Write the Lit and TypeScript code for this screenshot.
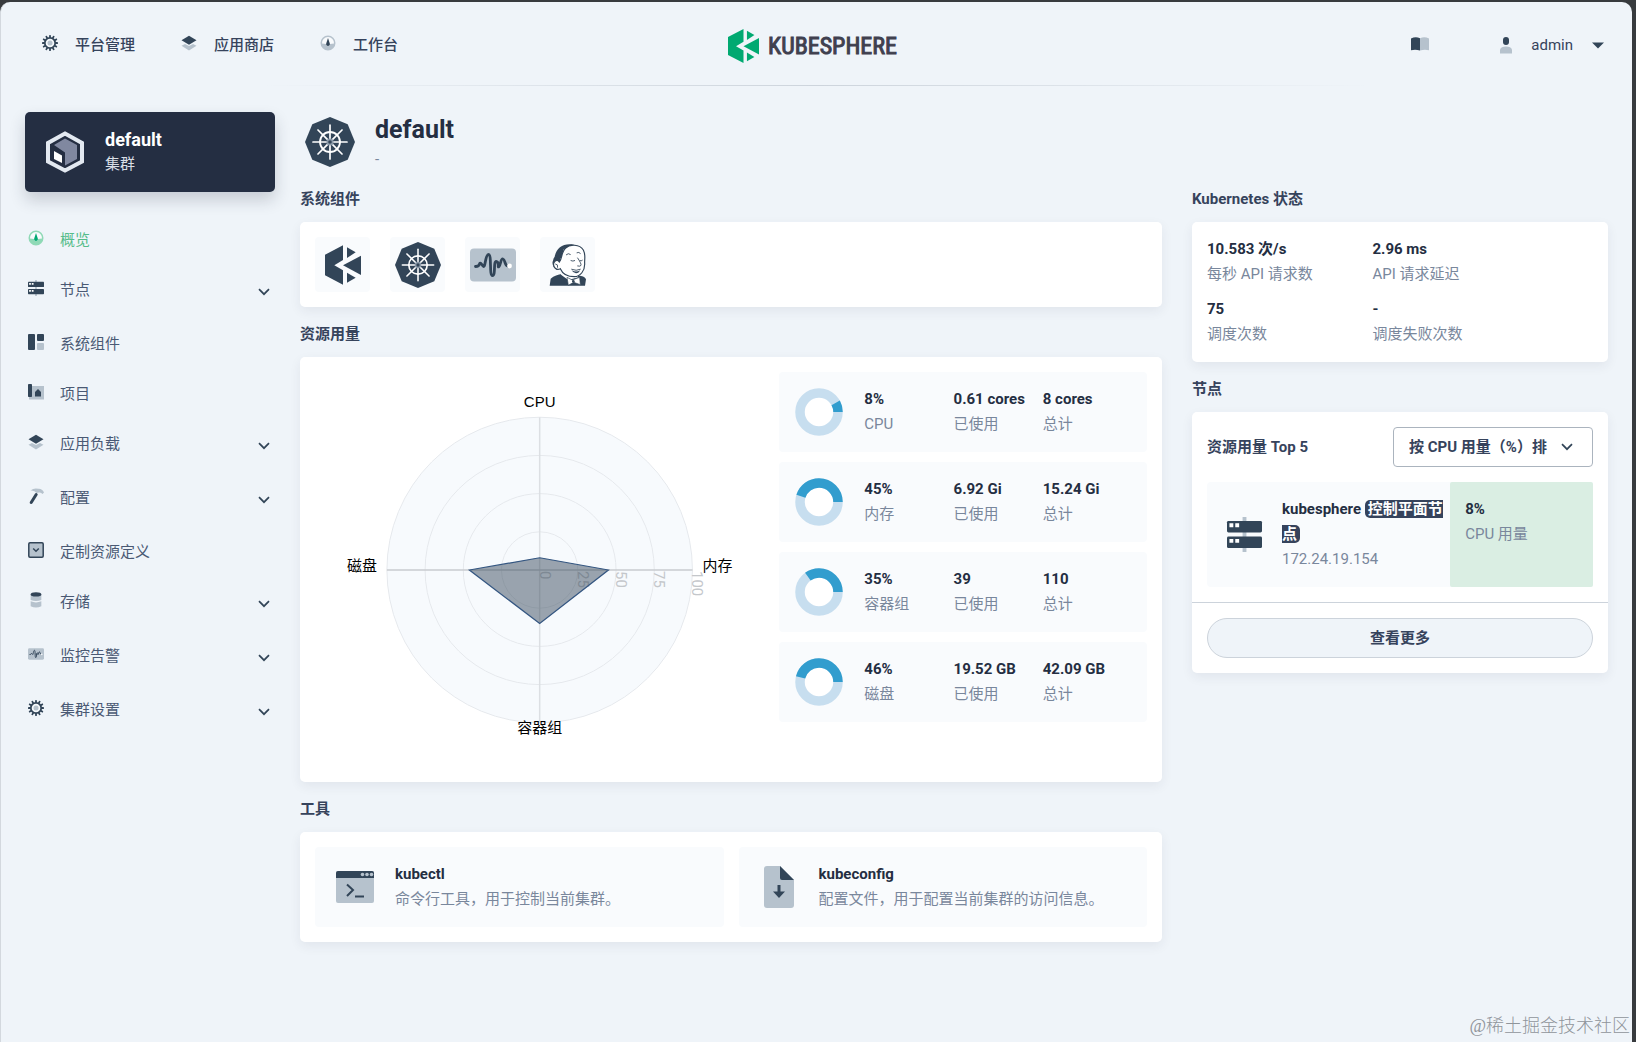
import { LitElement, html, svg, css } from "lit";
import { customElement, property } from "lit/decorators.js";

const D = "#324558";
const L = "#b6c2cd";

const teeth = Array.from({ length: 12 }, (_, i) => i * 30);
const spokes = Array.from({ length: 8 }, (_, i) => i * 45);

const wheel = svg`
  <path fill=${D} d="M25 0 42.7 7.3 50 25 42.7 42.7 25 50 7.3 42.7 0 25 7.3 7.3z"/>
  <circle cx="25" cy="25" r="10" fill="none" stroke="#fff" stroke-width="1.8"/>
  ${spokes.map(
    (a) => svg`<g transform="rotate(${a} 25 25)">
      <path d="M25 22V8" stroke="#fff" stroke-width="1.7" stroke-linecap="round"/>
    </g>`
  )}
  <circle cx="25" cy="25" r="3.6" fill="#8a99a8"/>
  <circle cx="25" cy="25" r="1.8" fill=${D}/>`;

const sphere = (fill: string) => svg`
  <g fill=${fill}>
    <path d="M0 28 54 0V44L28 60 54 75V118L0 90z"/>
    <path d="M66 6 92 21 66 38z"/>
    <path d="M54 60 108 31V89z"/>
    <path d="M66 82 92 97 66 112z"/>
  </g>`;

const gauge = (dark: string, light: string) => svg`
  <circle cx="8" cy="8" r="7" fill="#fff" fill-opacity=".6"/>
  <path fill=${light} d="M8 .5a7.500 7.500 0 1 0 0 15 7.500 7.500 0 0 0 0-15zm0 1.500a6 6 0 0 1 6 6.500l-4 .5a2 2 0 0 1-4 0l-4-.5A6 6 0 0 1 8 2z"/>
  <path fill=${dark} d="M8 3 9.800 8.600a1.900 1.900 0 1 1-3.600 0z"/>`;

const icons: Record<string, { box: string; art: unknown }> = {
  gear: {
    box: "0 0 16 16",
    art: svg`
      ${teeth.map(
        (a) => svg`<rect x="7.100" y="0" width="1.800" height="3.400" rx=".4" fill=${D} transform="rotate(${a} 8 8)"/>`
      )}
      <circle cx="8" cy="8" r="5.200" fill="#f4f8fb" stroke=${D} stroke-width="1.800"/>
      <circle cx="8" cy="8" r="2.500" fill=${L}/>`,
  },
  layers: {
    box: "0 0 16 16",
    art: svg`
      <path fill=${L} d="M.5 10.800 4 9l4 2 4-2 3.500 1.800L8 15.500z"/>
      <path fill=${D} d="M8 .8 15.500 5.300 8 9.800.5 5.300z"/>`,
  },
  gauge: { box: "0 0 16 16", art: gauge(D, L) },
  gaugeOn: { box: "0 0 16 16", art: gauge("#00a971", "#8fd9b6") },
  book: {
    box: "0 0 18 14",
    art: svg`
      <path fill=${D} d="M0 1.500Q4.500-.6 9 1.200V13.500Q4.500 12 0 13.200z"/>
      <path fill=${L} d="M18 1.500Q13.500-.6 9 1.200V13.500Q13.500 12 18 13.200z"/>`,
  },
  user: {
    box: "0 0 12 17",
    art: svg`
      <rect x="3" y="0" width="6" height="8" rx="3" fill=${D}/>
      <path fill=${L} d="M0 16.500V12.500Q1 9.500 6 9.500T12 12.500V16.500z"/>`,
  },
  caret: { box: "0 0 12 7", art: svg`<path fill=${D} d="M0 .5H12L6 6.500z"/>` },
  chevron: {
    box: "0 0 12 8",
    art: svg`<path fill="none" stroke=${D} stroke-width="1.700" d="M1 1.200 6 6.200 11 1.200"/>`,
  },
  nodes: {
    box: "0 0 36 36",
    art: svg`
      <path fill=${L} d="M16 0h4v36h-4z"/>
      <rect y="4" width="36" height="12" rx="1.500" fill=${D}/>
      <rect y="20" width="36" height="12" rx="1.500" fill=${D}/>
      <path fill="#fff" d="M2.500 6.500h4v4h-4zM8.500 6.500h4v4h-4zM2.500 22.500h4v4h-4zM8.500 22.500h4v4h-4z"/>`,
  },
  components: {
    box: "0 0 16 16",
    art: svg`
      <rect width="7" height="16" rx="1" fill=${D}/>
      <rect x="9" width="7" height="7" rx="1" fill=${D}/>
      <rect x="9" y="9" width="7" height="7" rx="1" fill=${L}/>`,
  },
  project: {
    box: "0 0 16 16",
    art: svg`
      <path fill=${L} d="M1 2h15v13.500H1z"/>
      <rect x="0" y="0" width="4" height="13" rx=".8" fill=${D}/>
      <path fill=${D} d="M10 5 13 8V12.500H7V8z"/>`,
  },
  hammer: {
    box: "0 0 16 16",
    art: svg`
      <path fill=${L} d="M2.500 2.500Q6-.5 10.500.8 14 .5 16 4.500L14.500 6Q13 4 11 4.500L8.500 5Q6.500 2 2.500 2.500z"/>
      <path stroke=${D} stroke-width="3" stroke-linecap="round" d="M8.200 6.500 3.200 14.500"/>`,
  },
  crd: {
    box: "0 0 16 16",
    art: svg`
      <rect x=".8" y=".8" width="14.400" height="14.400" rx="1.200" fill=${L} stroke=${D} stroke-width="1.500"/>
      <path fill="none" stroke=${D} stroke-width="1.500" d="M5.200 6.500 8 9.300 10.800 6.500"/>`,
  },
  storage: {
    box: "0 0 16 18",
    art: svg`
      <path fill=${L} d="M2 3V9Q8 11.500 14 9V3zM2 10.500V16Q8 18.800 14 16V10.500Q8 13 2 10.500z"/>
      <ellipse cx="8" cy="2.800" rx="6" ry="2.400" fill=${D}/>`,
  },
  monitor: {
    box: "0 0 46 33",
    art: svg`
      <rect width="46" height="33" rx="4" fill=${L}/>
      <path fill="none" stroke=${D} stroke-width="2.800" stroke-linecap="round" stroke-linejoin="round"
        d="M5.500 18Q9 18 9.500 15.500T13 17.500C15.500 21 15 6 18.500 6S19 27 22.500 27 23 12 26.500 13 27 20 29 18 30.500 10 33 10.500 34 17 38 17.500"/>
      <circle cx="39.500" cy="17.500" r="2.400" fill="#fff"/>`,
  },
  cluster: {
    box: "0 0 38 42",
    art: svg`
      <path fill="none" stroke="#e3e9f1" stroke-width="4" d="M19 2.500 36 12V30.500L19 39.500 2 30.500V12z"/>
      <path fill="#8088a0" d="M19 7.500 31 14V28L19 34.500V21.500L8 14z"/>
      <path fill="#fff" d="M8 20 16 24.500V32L8 28z"/>`,
  },
  wheel: { box: "0 0 50 50", art: wheel },
  sphere: { box: "0 0 108 118", art: sphere(D) },
  logo: { box: "0 0 108 118", art: sphere("#00a971") },
  jenkins: {
    box: "0 0 114 126",
    art: svg`
      <path fill=${D} d="M2 125 5 104Q20 92 40 90L82 94Q108 96 111 106L108 125z"/>
      <path fill="#fff" d="M38 78 36 92 58 108 88 100 82 88z"/>
      <path fill=${D} d="M68 1C42-2 22 12 17 38Q13 42 12 50 8 58 14 68L24 78 40 60 34 44Q44 34 42 18 56 6 82 5z"/>
      <path fill="#fff" stroke=${D} stroke-width="3.500" d="M50 12C62 0 92 0 103 18 111 34 106 44 107 58 108 80 94 98 76 98 56 98 40 88 34 74 22 80 12 70 14 58 18 46 28 48 31 54 40 46 36 24 50 12z"/>
      <path fill="none" stroke=${D} stroke-width="2.600" stroke-linecap="round" d="M52 32Q58 26 64 31M84 26Q90 23 94 28M66 50Q72 53 77 50M93 50Q97 52 100 49M86 42Q98 60 96 64T86 66M68 76Q82 82 94 76M20 60Q28 60 26 70"/>
      <path fill=${D} d="M68 79Q82 86 93 79 90 88 81 88 72 87 68 79z"/>
      <path fill="#fff" stroke=${D} stroke-width="2" d="M54 100 70 108 92 100 94 122 74 115 58 124z"/>
      <circle cx="73" cy="112" r="4" fill=${D}/>`,
  },
  terminal: {
    box: "0 0 38 32",
    art: svg`
      <rect width="38" height="32" rx="2" fill=${L}/>
      <path fill=${D} d="M2 0H36a2 2 0 0 1 2 2V7H0V2A2 2 0 0 1 2 0z"/>
      <g fill=${L}><circle cx="26.500" cy="3.500" r="1.800"/><circle cx="31" cy="3.500" r="1.800"/><circle cx="35.500" cy="3.500" r="1.800"/></g>
      <path fill="none" stroke=${D} stroke-width="2" d="M11 13.500 17 19 11 25M19 25.500H28"/>`,
  },
  file: {
    box: "0 0 30 42",
    art: svg`
      <path fill=${L} d="M3 0H16L30 14V39a3 3 0 0 1-3 3H3a3 3 0 0 1-3-3V3A3 3 0 0 1 3 0z"/>
      <path fill=${D} d="M16 0 30 14H18a2 2 0 0 1-2-2z"/>
      <path fill=${D} d="M13.500 19h3v6.500H21L15 32 9 25.500h4.500z"/>`,
  },
};

const icon = (name: string, cls: string) =>
  html`<svg class="icon ${cls}" viewBox=${icons[name].box} aria-hidden="true">${icons[name].art}</svg>`;

const menu = [
  { icon: "gaugeOn", label: "概览", on: true },
  { icon: "nodes", label: "节点", more: true },
  { icon: "components", label: "系统组件" },
  { icon: "project", label: "项目" },
  { icon: "layers", label: "应用负载", more: true },
  { icon: "hammer", label: "配置", more: true },
  { icon: "crd", label: "定制资源定义" },
  { icon: "storage", label: "存储", more: true },
  { icon: "monitor", label: "监控告警", more: true },
  { icon: "gear", label: "集群设置", more: true },
];

const usage = [
  { name: "CPU", pct: 8, used: "0.61 cores", total: "8 cores" },
  { name: "内存", pct: 45, used: "6.92 Gi", total: "15.24 Gi" },
  { name: "容器组", pct: 35, used: "39", total: "110" },
  { name: "磁盘", pct: 46, used: "19.52 GB", total: "42.09 GB" },
];

const status = [
  { value: "10.583 次/s", label: "每秒 API 请求数" },
  { value: "2.96 ms", label: "API 请求延迟" },
  { value: "75", label: "调度次数" },
  { value: "-", label: "调度失败次数" },
];

const shared = css`
  * {
    box-sizing: border-box;
  }
  .icon {
    display: block;
    flex: none;
    overflow: visible;
  }
  .value {
    font-weight: 700;
    color: #242e42;
  }
  .label {
    color: #79879c;
  }
`;

@customElement("usage-radar")
class UsageRadar extends LitElement {
  @property({ attribute: false }) rows = usage;

  static styles = css`
    :host {
      display: block;
    }
    .chart {
      display: block;
      width: 100%;
      height: 395px;
    }
    .axis-name {
      font: 15px "Liberation Sans", "Noto Sans CJK SC", sans-serif;
      fill: #000;
    }
    .tick {
      font: 15px Roboto, sans-serif;
      fill: #c4c7cb;
    }
  `;

  render() {
    const cx = 225;
    const cy = 198;
    const r = 153;
    const [cpu, mem, pod, disk] = this.rows.map((u) => (u.pct * r) / 100);
    const area = `${cx},${cy - cpu} ${cx + mem},${cy} ${cx},${cy + pod} ${cx - disk},${cy}`;
    return html`<svg class="chart" viewBox="0 0 450 395" role="img" aria-label="资源用量">
      <circle cx=${cx} cy=${cy} r=${r} fill="#f7fafd" />
      ${[0.25, 0.5, 0.75, 1].map(
        (k) => svg`<circle cx=${cx} cy=${cy} r=${k * r} fill="none" stroke="#e6e9ed"/>`
      )}
      <path d="M${cx} ${cy - r}V${cy + r}" stroke="#dcdfe3" stroke-width="1.5" />
      <path d="M${cx - r} ${cy}H${cx + r}" stroke="#c9cbcf" stroke-width="1.5" />
      ${[0, 25, 50, 75, 100].map(
        (t) => svg`<text class="tick" transform="translate(${cx + (t * r) / 100} ${cy + 1}) rotate(90)">${t}</text>`
      )}
      <polygon points=${area} fill="#324558" fill-opacity=".48" stroke="#345681" stroke-width="1.2" />
      <g class="axis-name">
        <text x=${cx} y="35" text-anchor="middle">CPU</text>
        <text x="388" y="199">内存</text>
        <text x=${cx} y="361" text-anchor="middle">容器组</text>
        <text x="62" y="199" text-anchor="end">磁盘</text>
      </g>
    </svg>`;
  }
}

@customElement("usage-row")
class UsageRow extends LitElement {
  @property({ attribute: false }) row = usage[0];

  static styles = [
    shared,
    css`
      :host {
        display: block;
      }
      .row {
        display: flex;
        align-items: center;
        gap: 20px;
        padding: 15px;
        background: #f9fbfd;
        border-radius: 4px;
        line-height: 25px;
      }
      .donut {
        flex: none;
        width: 50px;
        height: 50px;
      }
      .cells {
        flex: 1;
        display: grid;
        grid-template-columns: repeat(3, minmax(0, 1fr));
        white-space: nowrap;
      }
    `,
  ];

  render() {
    const u = this.row;
    return html`<div class="row">
      <svg class="donut" viewBox="0 0 50 50" aria-hidden="true">
        <circle cx="25" cy="25" r="19" fill="#fff" stroke="#c7deef" stroke-width="9.5" />
        <circle
          cx="25" cy="25" r="19" fill="none" stroke="#329dce" stroke-width="9.5"
          pathLength="100" stroke-dasharray="${u.pct} 100" transform="matrix(1 0 0 -1 0 50)"
        />
      </svg>
      <div class="cells">
        <div><div class="value">${u.pct}%</div><div class="label">${u.name}</div></div>
        <div><div class="value">${u.used}</div><div class="label">已使用</div></div>
        <div><div class="value">${u.total}</div><div class="label">总计</div></div>
      </div>
    </div>`;
  }
}

@customElement("app-root")
class AppRoot extends LitElement {
  static styles = [
    shared,
    css`
      :host {
        display: block;
        background: #383b3e;
        font: 15px/25px Roboto, "Noto Sans CJK SC", sans-serif;
        color: #36435c;
      }
      a {
        color: inherit;
        text-decoration: none;
      }
      h1, h2, h3, p, ul {
        margin: 0;
        padding: 0;
        font-size: inherit;
      }
      button, select {
        font: inherit;
        color: inherit;
        cursor: pointer;
      }
      .shell {
        padding: 2px 4px 0 0;
      }
      .page {
        position: relative;
        min-height: calc(100vh - 2px);
        background: #eff4f9;
        border-left: 1px solid #d3d8de;
        border-radius: 10px 10px 0 0;
      }
      .top {
        display: grid;
        grid-template-columns: 1fr auto 1fr;
        align-items: center;
        height: 83px;
        padding: 4px 28px 0 20px;
      }
      .rule {
        height: 1px;
        background: linear-gradient(90deg, transparent 16%, #cdd4dc 50%, transparent 84%);
      }
      .links {
        display: flex;
        gap: 46px;
        padding-left: 21px;
        font-weight: 500;
      }
      .link {
        display: flex;
        gap: 17px;
      }
      .link .icon {
        margin-top: 2px;
      }
      .brand {
        display: flex;
        align-items: center;
        gap: 9px;
      }
      .brand-name {
        font: 24px/34px "Liberation Sans Narrow", "Roboto Condensed", Roboto, sans-serif;
        color: #40404f;
        -webkit-text-stroke: 1px #40404f;
      }
      .account {
        display: flex;
        justify-content: flex-end;
        align-items: center;
        gap: 71px;
      }
      .plain {
        display: flex;
        align-items: center;
        gap: 19px;
        padding: 0;
        border: 0;
        background: none;
      }
      .s16 { width: 16px; height: 16px; }
      .s-book { width: 18px; height: 14px; margin-bottom: 4px; }
      .s-user { width: 12px; height: 17px; }
      .s-caret { width: 12px; height: 7px; }
      .s-chev { width: 12px; height: 8px; }
      .s-logo { width: 31px; height: 34px; }
      .s-cluster { width: 38px; height: 42px; }
      .s50 { width: 50px; height: 50px; }
      .s46 { width: 46px; height: 46px; }
      .s-sphere { width: 36px; height: 40px; }
      .s-jenkins { width: 38px; height: 42px; }
      .s-term { width: 38px; height: 32px; }
      .s-file { width: 38px; height: 42px; }
      .s36 { width: 35px; height: 35px; }

      .body {
        display: flex;
        gap: 25px;
        padding: 26px 24px 40px 24px;
      }
      .side {
        flex: none;
        width: 250px;
      }
      .current {
        display: flex;
        align-items: center;
        gap: 21px;
        width: 100%;
        height: 80px;
        padding: 0 21px;
        border: 0;
        border-radius: 5px;
        background: #242e42;
        box-shadow: 0 8px 16px rgba(36, 46, 66, 0.2);
        color: #d8dee5;
        text-align: left;
      }
      .current-name {
        display: block;
        font-size: 18px;
        font-weight: 700;
        color: #fff;
      }
      .current-kind {
        display: block;
      }
      .menu {
        margin-top: 36px;
        list-style: none;
        color: #4a5974;
      }
      .item {
        display: flex;
        align-items: flex-start;
        gap: 16px;
        height: 50px;
        padding: 0 5px 0 3px;
      }
      .item.more {
        height: 54px;
      }
      .item.on {
        color: #55bc8a;
      }
      .item .icon {
        margin-top: 2px;
      }
      .item-label {
        flex: 1;
      }
      .item .s-chev {
        margin-top: 10px;
      }
      .main {
        flex: 1;
        min-width: 0;
        padding-top: 5px;
      }
      .title {
        display: flex;
        gap: 20px;
        margin-bottom: 11px;
        padding-left: 5px;
      }
      .title-name {
        font-size: 25px;
        font-weight: 700;
        color: #242e42;
      }
      .title-note {
        color: #79879c;
        line-height: 34px;
      }
      .columns {
        display: grid;
        grid-template-columns: minmax(0, 1fr) 416px;
        gap: 30px;
      }
      .column {
        display: flex;
        flex-direction: column;
        gap: 15px;
      }
      .heading {
        margin-bottom: 10px;
        font-weight: 700;
      }
      .card {
        padding: 15px;
        border-radius: 5px;
        background: #fff;
        box-shadow: 0 4px 12px rgba(36, 46, 66, 0.07);
      }
      .services {
        display: flex;
        gap: 20px;
      }
      .service {
        display: flex;
        align-items: center;
        justify-content: center;
        width: 55px;
        height: 55px;
        border-radius: 4px;
        background: #f9fbfd;
      }
      .usage {
        display: grid;
        grid-template-columns: minmax(0, 11fr) minmax(0, 9fr);
        gap: 15px;
      }
      .usage-list {
        display: flex;
        flex-direction: column;
        gap: 10px;
      }
      .tools {
        display: grid;
        grid-template-columns: 1fr 1fr;
        gap: 15px;
      }
      .tool {
        display: flex;
        align-items: center;
        gap: 21px;
        padding: 15px 21px;
        border: 0;
        border-radius: 4px;
        background: #f9fbfd;
        text-align: left;
      }
      .tool-text {
        display: block;
      }
      .tool-text span {
        display: block;
      }
      .status {
        display: grid;
        grid-template-columns: 3fr 4fr;
        row-gap: 10px;
      }
      .top5 {
        display: flex;
        align-items: center;
        justify-content: space-between;
        font-weight: 700;
      }
      .picker {
        display: grid;
        align-items: center;
        width: 200px;
      }
      .picker select {
        grid-area: 1 / 1;
        width: 100%;
        height: 40px;
        padding: 0 15px;
        border: 1px solid #abb4be;
        border-radius: 4px;
        background: #fff;
        appearance: none;
      }
      .picker .icon {
        grid-area: 1 / 1;
        justify-self: end;
        margin-right: 20px;
        pointer-events: none;
      }
      .node {
        display: grid;
        grid-template-columns: 63fr 37fr;
        margin-top: 15px;
        border-radius: 4px;
        background: #f9fbfd;
      }
      .node-info {
        display: flex;
        align-items: center;
        gap: 20px;
        padding: 15px 0 15px 20px;
      }
      .badge {
        padding: 0 3px;
        border-radius: 5px;
        background: #36435c;
        color: #fff;
      }
      .node-cpu {
        padding: 15px;
        border-radius: 2px;
        background: #daeee3;
      }
      .more-bar {
        margin: 15px -15px 0;
        padding: 15px 15px 0;
        border-top: 1px solid #ccd3db;
      }
      .more-button {
        display: block;
        width: 100%;
        height: 40px;
        border: 1px solid #ccd3db;
        border-radius: 20px;
        background: #eff4f9;
        font-weight: 700;
      }
      .mark {
        position: absolute;
        right: 2px;
        bottom: 3px;
        font: 300 18px/25px "Liberation Serif", "Noto Sans CJK SC", serif;
        color: #8f959b;
      }
    `,
  ];

  render() {
    return html`<div class="shell">
      <div class="page">
        <header class="top">
          <nav class="links">
            <a class="link" href="#platform">${icon("gear", "s16")}平台管理</a>
            <a class="link" href="#store">${icon("layers", "s16")}应用商店</a>
            <a class="link" href="#workbench">${icon("gauge", "s16")}工作台</a>
          </nav>
          <a class="brand" href="#home">${icon("logo", "s-logo")}<span class="brand-name">KUBESPHERE</span></a>
          <div class="account">
            <button class="plain" aria-label="文档">${icon("book", "s-book")}</button>
            <button class="plain">${icon("user", "s-user")}<span>admin</span>${icon("caret", "s-caret")}</button>
          </div>
        </header>
        <div class="rule"></div>
        <div class="body">
          <aside class="side">
            <button class="current">
              ${icon("cluster", "s-cluster")}
              <span><span class="current-name">default</span><span class="current-kind">集群</span></span>
            </button>
            <ul class="menu">
              ${menu.map(
                (m) => html`<li>
                  <a class="item ${m.on ? "on" : ""} ${m.more ? "more" : ""}" href="#${m.icon}">
                    ${icon(m.icon, "s16")}<span class="item-label">${m.label}</span>
                    ${m.more ? icon("chevron", "s-chev") : ""}
                  </a>
                </li>`
              )}
            </ul>
          </aside>
          <main class="main">
            <div class="title">
              ${icon("wheel", "s50")}
              <div>
                <h1 class="title-name">default</h1>
                <p class="title-note">-</p>
              </div>
            </div>
            <div class="columns">
              <div class="column">
                <section>
                  <h2 class="heading">系统组件</h2>
                  <div class="card services">
                    <a class="service" href="#ks" aria-label="KubeSphere">${icon("sphere", "s-sphere")}</a>
                    <a class="service" href="#k8s" aria-label="Kubernetes">${icon("wheel", "s46")}</a>
                    <a class="service" href="#mon" aria-label="监控">${icon("monitor", "s46")}</a>
                    <a class="service" href="#ci" aria-label="DevOps">${icon("jenkins", "s-jenkins")}</a>
                  </div>
                </section>
                <section>
                  <h2 class="heading">资源用量</h2>
                  <div class="card usage">
                    <usage-radar .rows=${usage}></usage-radar>
                    <div class="usage-list">${usage.map((u) => html`<usage-row .row=${u}></usage-row>`)}</div>
                  </div>
                </section>
                <section>
                  <h2 class="heading">工具</h2>
                  <div class="card tools">
                    <button class="tool">
                      ${icon("terminal", "s-term")}
                      <span class="tool-text"><span class="value">kubectl</span><span class="label">命令行工具，用于控制当前集群。</span></span>
                    </button>
                    <button class="tool">
                      ${icon("file", "s-file")}
                      <span class="tool-text"><span class="value">kubeconfig</span><span class="label">配置文件，用于配置当前集群的访问信息。</span></span>
                    </button>
                  </div>
                </section>
              </div>
              <div class="column">
                <section>
                  <h2 class="heading">Kubernetes 状态</h2>
                  <div class="card status">
                    ${status.map(
                      (s) => html`<div><div class="value">${s.value}</div><div class="label">${s.label}</div></div>`
                    )}
                  </div>
                </section>
                <section>
                  <h2 class="heading">节点</h2>
                  <div class="card">
                    <div class="top5">
                      <label for="sort">资源用量 Top 5</label>
                      <div class="picker">
                        <select id="sort"><option>按 CPU 用量（%）排</option></select>
                        ${icon("chevron", "s-chev")}
                      </div>
                    </div>
                    <div class="node">
                      <div class="node-info">
                        ${icon("nodes", "s36")}
                        <div>
                          <div class="value">kubesphere <span class="badge">控制平面节点</span></div>
                          <div class="label">172.24.19.154</div>
                        </div>
                      </div>
                      <div class="node-cpu"><div class="value">8%</div><div class="label">CPU 用量</div></div>
                    </div>
                    <div class="more-bar"><button class="more-button">查看更多</button></div>
                  </div>
                </section>
              </div>
            </div>
          </main>
        </div>
        <div class="mark">@稀土掘金技术社区</div>
      </div>
    </div>`;
  }
}
